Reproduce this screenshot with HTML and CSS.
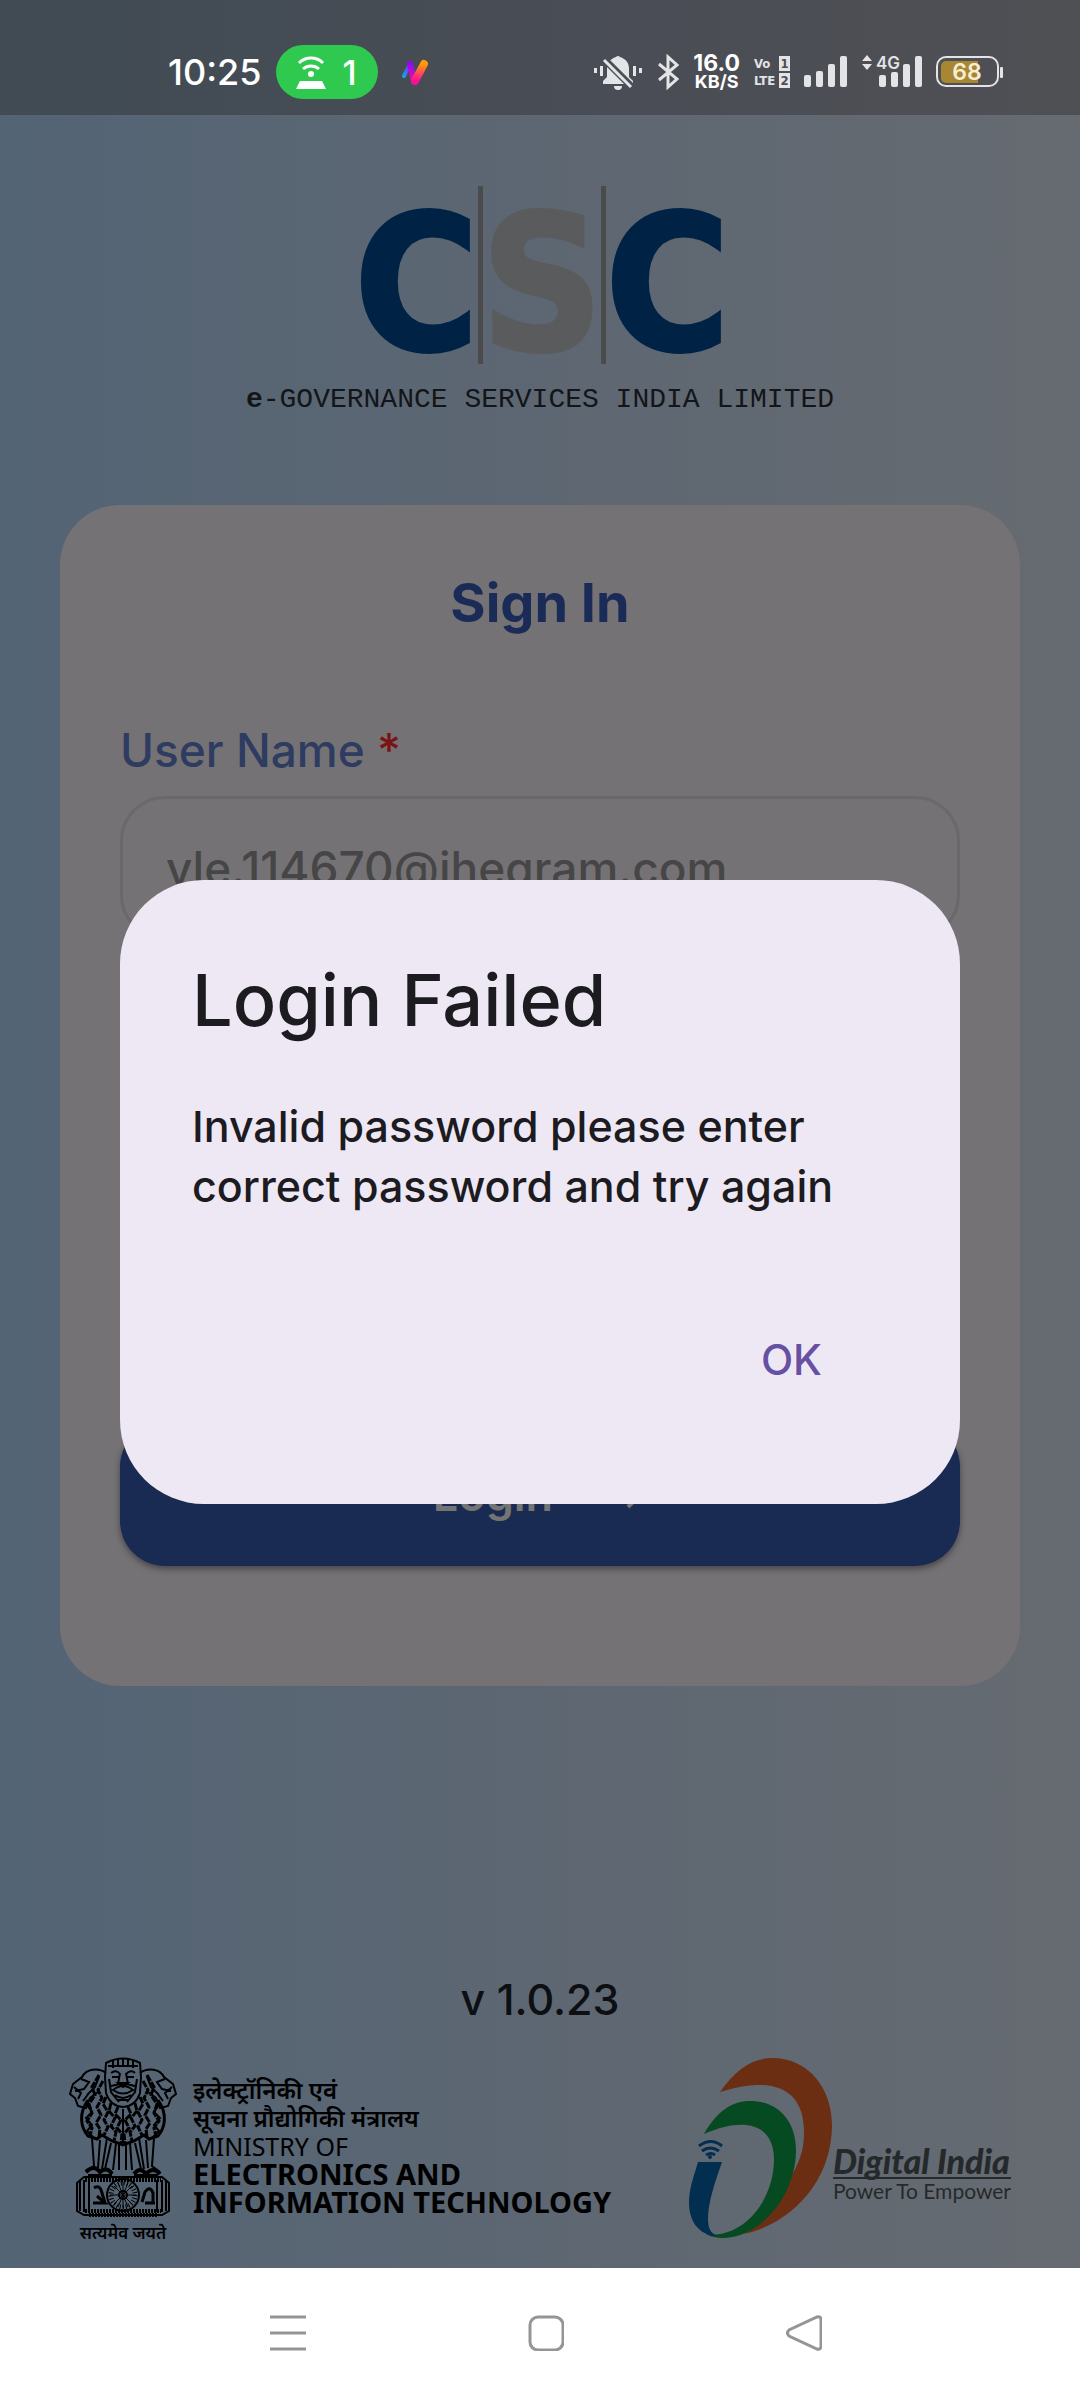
FILE: index.html
```html
<!DOCTYPE html>
<html lang="en">
<head>
  <meta charset="UTF-8" />
  <meta name="viewport" content="width=device-width, initial-scale=1.0"/>
  <title>CSC Login</title>
  <link rel="stylesheet" href="styles.css">
</head>
<body>

  <!-- Status bar -->
  <header class="status-bar">
    <div class="status-left">
      <span class="time">10:25</span>
      <span class="hotspot">
        <svg width="30" height="34" viewBox="0 0 30 34">
          <path d="M3 8a17 17 0 0 1 24 0M7 14a12 12 0 0 1 16 0" fill="none" stroke="#fff" stroke-width="3"/>
          <circle cx="15" cy="19" r="3" fill="#fff"/>
          <path d="M4 26h22l4 8H0z" fill="#fff"/>
        </svg>
        1
      </span>
      <svg class="app-icon" width="28" height="28" viewBox="0 0 28 28">
        <defs>
          <linearGradient id="g1" x1="0" y1="1" x2="1" y2="0"><stop offset="0" stop-color="#18a0e8"/><stop offset="1" stop-color="#9a10f0"/></linearGradient>
          <linearGradient id="g2" x1="0" y1="0" x2="0" y2="1"><stop offset="0" stop-color="#9008f8"/><stop offset="1" stop-color="#f0109a"/></linearGradient>
          <linearGradient id="g3" x1="0" y1="1" x2="0" y2="0"><stop offset="0" stop-color="#ff0a9c"/><stop offset="1" stop-color="#ff9a08"/></linearGradient>
        </defs>
        <path d="M2 18L8 6" stroke="url(#g1)" stroke-width="4" stroke-linecap="round"/>
        <path d="M8 6L12 23" stroke="url(#g2)" stroke-width="6" stroke-linecap="round"/>
        <path d="M13 23L22 6" stroke="url(#g3)" stroke-width="8" stroke-linecap="round"/>
      </svg>
    </div>
    <div class="status-right">
      <svg width="50" height="36" viewBox="0 0 50 36" fill="#e3e4e6">
        <path d="M1 14h3v5H1zM7 12h3v10H7zM40 12h3v10h-3zM46 14h3v5h-3z"/>
        <path d="M23 3a3 3 0 0 1 4 0c6 2 9 6 9 12v8l4 4v3H10v-3l4-4v-8c0-6 3-10 9-12zM21 32h8a4 4 0 0 1-8 0z"/>
        <path d="M10 4l28 28" stroke="#4a4e56" stroke-width="7"/>
        <path d="M11 6l27 27" stroke="#e3e4e6" stroke-width="3"/>
      </svg>
      <svg width="22" height="36" viewBox="0 0 22 36" fill="none" stroke="#e3e4e6" stroke-width="3">
        <path d="M2 10l18 15-9 8V3l9 8L2 26"/>
      </svg>
      <div class="speed"><span>16.0</span><small>KB/S</small></div>
      <div class="volte">
        <span>Vo</span><b>1</b>
        <span>LTE</span><b>2</b>
      </div>
      <svg width="44" height="34" viewBox="0 0 44 34" fill="#e3e4e6">
        <rect x="0" y="20" width="7" height="12" rx="2"/>
        <rect x="12" y="16" width="7" height="16" rx="2"/>
        <rect x="24" y="9" width="7" height="23" rx="2"/>
        <rect x="36" y="1" width="7" height="31" rx="2"/>
      </svg>
      <svg class="signal-4g" width="60" height="34" viewBox="0 0 60 34" fill="#e3e4e6">
        <path d="M0 6l5-6 5 6zM0 9l5 6 5-6z"/>
        <text x="14" y="14" font-size="17">4G</text>
        <rect x="17" y="20" width="7" height="12" rx="2"/>
        <rect x="29" y="17" width="7" height="15" rx="2"/>
        <rect x="41" y="9" width="7" height="23" rx="2"/>
        <rect x="53" y="1" width="7" height="31" rx="2"/>
      </svg>
      <svg class="battery" width="68" height="32" viewBox="0 0 68 32">
        <rect x="1" y="1" width="61" height="29" rx="9" fill="none" stroke="#e3e4e6" stroke-width="2"/>
        <path d="M10 5h32v22H10a5 5 0 0 1-5-5V10a5 5 0 0 1 5-5z" fill="#a98632"/>
        <rect x="64" y="11" width="3" height="11" rx="1" fill="#e3e4e6"/>
        <text x="31" y="24" font-size="23" text-anchor="middle" fill="#f7edd2">68</text>
      </svg>
    </div>
  </header>

  <main class="app">
    <div class="logo">
      <div class="logo-letters">
        <span>C</span><i></i><span class="grey">S</span><i></i><span>C</span>
      </div>
      <p class="logo-text"><b>e</b>-Governance Services India limited</p>
    </div>

    <form class="login-box">
      <h2>Sign In</h2>
      <label for="username">User Name <span class="required">*</span></label>
      <input type="text" id="username" value="vle.114670@ihegram.com" />
      <input type="password" id="password" aria-label="Password" />
      <button type="submit" class="login-btn">
        Login
        <svg width="34" height="34" viewBox="0 0 34 34" fill="none" stroke="#747474" stroke-width="4"><path d="M3 17h26M15 4l13 13-13 13"/></svg>
      </button>
    </form>

    <footer class="footer">
      <p class="version">v 1.0.23</p>
      <div class="partners">
        <div class="ministry">
          <div class="emblem">
            <svg width="108" height="160" viewBox="0 0 108 160" fill="none" stroke="#000" stroke-width="2">
              <!-- side lions -->
              <path d="M37 16c-8-6-20-4-24 4L4 27l-3 10 5 4 3 8 8 2 4-10 8-6M71 16c8-6 20-4 24 4l9 7 3 10-5 4-3 8-8 2-4-10-8-6"/>
              <path d="M12 22l8 3-5 7-9 2M5 30l7 6-3 6M18 38l8-8 4-10M14 44l6-8M96 22l-8 3 5 7 9 2M103 30l-7 6 3 6M90 38l-8-8-4-10M94 44l-6-8"/>
              <!-- centre lion -->
              <path d="M37 6q17-9 34 0l1 14-1 16q-4 13-17 14-13-1-17-14l-1-16z"/>
              <path d="M39 9h30M44 3v8M49 2v8M54 1v8M59 2v8M64 3v8M42 16q5-4 9 1M57 17q5-5 9-1M43 20h7M58 20h7M51 16l-2 11h10l-2-11M42 29l9-2M57 27l9 2M44 33q10-8 20 0-10 7-20 0zM46 38q8 6 16 0M49 43h10M40 22l2 13 8 10M68 22l-2 13-8 10"/>
              <path d="M49 26h10l-5 4z" fill="#000"/>
              <!-- manes -->
              <path d="M19 43c-10 14-7 28 0 36l9 3 5-4 10 6 11 4 11-4 10-6 5 4 9-3c7-8 10-22 0-36" stroke-width="3"/>
              <path d="M18 48l5 7-6 6 6 7-5 6 6 6M90 48l-5 7 6 6-6 7 5 6-6 6M54 52v34"/>
              <path d="M30 18l-7 12 3 8-6 9 3 9-5 8 5 7-2 8M34 24l-5 9 4 8-5 9 4 8-5 8 4 6-1 8M37 40l-3 7 5 8-4 8 4 7-4 8M42 46l-2 8 6 7-4 8 5 6-2 9M49 50l-3 7 6 6-4 8 5 6-1 9M78 18l7 12-3 8 6 9-3 9 5 8-5 7 2 8M74 24l5 9-4 8 5 9-4 8 5 8-4 6 1 8M71 40l3 7-5 8 4 8-4 7 4 8M66 46l2 8-6 7 4 8-5 6 2 9M59 50l3 7-6 6 4 8-5 6 1 9" stroke-dasharray="7 1" stroke-width="3"/>
              <!-- legs -->
              <path d="M23 81l2 28-8 6M31 83l-2 28M38 81l-5 31M47 86l-3 27M50 88v25M61 86l2 27M57 88v25M70 81l5 31M85 81l-2 28 8 6M77 83l2 28M42 86l-6 26M66 86l6 26"/>
              <path d="M17 115q8-8 14 0 7-6 12 2M65 117q6-8 12 0 7-8 14 0M19 119h24M65 119h24" stroke-width="4"/>
              <!-- base -->
              <path d="M15 120h78l7 6v28l-7 4H15l-7-4v-28zM15 123v32M20 123v32M11 124v30M97 124v30M93 123v32M88 123v32"/>
              <path d="M16 123h76M16 154h76" stroke-width="4" stroke-dasharray="2 1"/>
              <circle cx="54" cy="138" r="16"/>
              <circle cx="54" cy="138" r="12" stroke-width="5" stroke-dasharray="1 2"/>
              <circle cx="54" cy="138" r="4"/>
              <path d="M54 125v26M41 138h26M45 129l18 18M63 129l-18 18M49 126l10 24M59 126l-10 24" stroke-width="1"/>
              <path d="M25 131q6-4 8 5l3 10M24 146h12l-8-7M73 145l3-10q5-7 8 1v10M76 146h10" stroke-width="3"/>
              <path d="M20 158h68" stroke-width="4" stroke-dasharray="2 1"/>
            </svg>
            <p lang="hi">सत्यमेव जयते</p>
          </div>
          <div class="ministry-text">
            <p lang="hi">इलेक्ट्रॉनिकी एवं</p>
            <p lang="hi">सूचना प्रौद्योगिकी मंत्रालय</p>
            <p class="light">MINISTRY OF</p>
            <p class="bold">ELECTRONICS AND</p>
            <p class="bold">INFORMATION TECHNOLOGY</p>
          </div>
        </div>
        <div class="digital-india">
          <svg width="144" height="182" viewBox="0 0 144 182">
            <path d="M31 35C47 12 64 1 83 1c37 0 60 31 60 67 0 55-39 98-88 109 20-11 37-33 44-50 9-20 16-28 16-52 0-43-30-57-84-40z" fill="#6c2e12"/>
            <path d="M15 77C28 54 43 44 61 44c28 0 46 20 46 49 0 43-32 86-72 88-8 0-15-2-18-4 35 5 68-31 68-75 0-33-27-44-70-25z" fill="#054a20"/>
            <path d="M9 105h24c-8 23-14 41-14 57 0 10 3 14 9 17C8 178 0 162 0 146c0-15 5-27 9-41z" fill="#022e50"/>
            <path d="M10 89q12-9 23 0M13 94q8-6 17 0M17 98q5-3 9 0" fill="none" stroke="#022e50" stroke-width="3"/>
            <circle cx="21" cy="100" r="2" fill="#022e50"/>
          </svg>
          <div class="digital-text">
            <strong>Digital India</strong>
            <span>Power To Empower</span>
          </div>
        </div>
      </div>
    </footer>

    <div class="overlay">
      <div class="dialog" role="alertdialog" aria-labelledby="dialog-title">
        <h1 id="dialog-title">Login Failed</h1>
        <p>Invalid password please enter correct password and try again</p>
        <button type="button">OK</button>
      </div>
    </div>
  </main>

  <!-- Android navigation -->
  <nav class="nav-bar">
    <button type="button" aria-label="Recent apps">
      <svg width="36" height="36" viewBox="0 0 36 36" stroke="#959595" stroke-width="3"><path d="M0 2h36M0 18h36M0 34h36"/></svg>
    </button>
    <button type="button" aria-label="Home">
      <svg width="36" height="36" viewBox="0 0 36 36" fill="none" stroke="#959595" stroke-width="3"><rect x="2" y="2" width="33" height="33" rx="8"/></svg>
    </button>
    <button type="button" aria-label="Back">
      <svg width="36" height="36" viewBox="0 0 36 36" fill="none" stroke="#959595" stroke-width="3"><path d="M31 2q4-1 4 3v26q0 4-4 3L3 21q-3-3 0-6z"/></svg>
    </button>
  </nav>

</body>
</html>
```
FILE: styles.css
```css
* { margin: 0; padding: 0; box-sizing: border-box; }

body {
  min-height: 100vh;
  display: flex;
  flex-direction: column;
  font-family: Inter, 'Noto Sans', sans-serif;
  background: linear-gradient(to right, #536475, #5e6772 55%, #666b71);
  color: #0d0f12;
}

button {
  border: none;
  background: none;
  font-family: inherit;
  cursor: pointer;
}

.status-bar {
  height: 115px;
  padding: 29px 76px 0 168px;
  display: flex;
  justify-content: space-between;
  background: linear-gradient(to right, #404b54, #4a4d55 60%, #4f5054);
  color: #fff;
}

.status-left,
.status-right {
  height: 86px;
  display: flex;
  align-items: center;
}

.status-left {
  gap: 14px;
}

.time {
  font-size: 36px;
  font-weight: 500;
}

.hotspot {
  width: 102px;
  height: 54px;
  display: flex;
  align-items: center;
  justify-content: center;
  gap: 16px;
  border-radius: 27px;
  background: #30c950;
  font-size: 34px;
  font-weight: 500;
}

.app-icon {
  margin-left: 10px;
}

.status-right {
  gap: 14px;
}

.speed {
  display: flex;
  flex-direction: column;
  align-items: center;
  font-size: 23px;
  line-height: 19px;
  font-weight: 700;
}

.speed small {
  font-size: 18px;
  line-height: 17px;
}

.volte {
  display: grid;
  grid-template-columns: 24px 11px;
  gap: 2px 1px;
  font-family: 'DejaVu Sans Condensed', sans-serif;
  font-size: 13px;
  line-height: 15px;
  font-weight: 700;
  color: #e3e4e6;
}

.volte b {
  background: #e3e4e6;
  color: #4a4e56;
  text-align: center;
}

.signal-4g,
.battery {
  font-weight: 600;
}

.app {
  position: relative;
  flex: 1;
  display: flex;
  flex-direction: column;
}

.logo {
  padding-top: 71px;
  text-align: center;
}

.logo-letters {
  height: 178px;
  padding-left: 4px;
  display: flex;
  justify-content: center;
  gap: 7px;
  font-family: 'DejaVu Sans Condensed', sans-serif;
  font-size: 188px;
  font-weight: 700;
  line-height: 196px;
  color: #002345;
}

.logo-letters span {
  width: 109px;
  display: flex;
  justify-content: center;
  -webkit-text-stroke: 4px currentColor;
}

.logo-letters .grey {
  width: 104px;
  color: #5a5b5d;
}

.logo-letters i {
  width: 5px;
  background: #4b4b4b;
}

.logo-text {
  margin-top: 20px;
  font-family: 'Liberation Mono', monospace;
  font-size: 28px;
  line-height: 32px;
  text-transform: uppercase;
  color: #131518;
}

.logo-text b {
  text-transform: none;
}

.login-box {
  margin: 89px 60px 0;
  padding: 60px 60px 120px;
  display: flex;
  flex-direction: column;
  border-radius: 60px;
  background: #757275;
}

.login-box h2 {
  margin-bottom: 74px;
  text-align: center;
  font-size: 54px;
  line-height: 76px;
  font-weight: 700;
  color: #192b56;
}

.login-box label {
  margin-bottom: 11px;
  font-size: 46px;
  line-height: 70px;
  font-weight: 500;
  color: #2d3c60;
}

.login-box .required {
  color: #7a1414;
}

.login-box input {
  width: 100%;
  height: 144px;
  padding: 0 43px;
  border: 3px solid #6a696a;
  border-radius: 45px;
  background: transparent;
  font-family: inherit;
  font-size: 46px;
  font-weight: 500;
  color: #464646;
}

.login-box #password {
  margin-top: 115px;
}

.login-btn {
  height: 144px;
  margin-top: 223px;
  display: flex;
  align-items: center;
  justify-content: center;
  gap: 60px;
  border-radius: 45px;
  background: #192b52;
  box-shadow: 0 3px 6px rgba(0, 0, 0, 0.4);
  color: #747474;
  font-size: 45px;
  font-weight: 600;
}

.footer {
  margin-top: auto;
  padding: 0 69px 23px;
}

.version {
  margin-bottom: 28px;
  text-align: center;
  font-size: 43px;
  line-height: 60px;
  font-weight: 500;
}

.partners {
  display: flex;
  justify-content: space-between;
  color: #000;
}

.ministry,
.digital-india {
  display: flex;
}

.ministry {
  gap: 16px;
}

.emblem p {
  text-align: center;
  font-size: 17px;
  line-height: 24px;
  font-weight: 600;
}

.ministry-text {
  padding-top: 19px;
  font-family: 'Noto Sans', sans-serif;
  font-size: 24px;
  line-height: 28px;
  font-weight: 600;
  white-space: nowrap;
}

.ministry-text .light {
  font-size: 25px;
  font-weight: 400;
}

.ministry-text .bold {
  font-size: 29px;
  font-weight: 700;
}

.digital-text {
  padding-top: 88px;
  display: flex;
  flex-direction: column;
  font-family: Lato, sans-serif;
  color: #26292b;
}

.digital-text strong {
  border-bottom: 2px solid #26292b;
  font-size: 34px;
  line-height: 32px;
  font-style: italic;
  font-weight: 900;
}

.digital-text span {
  font-size: 21px;
  line-height: 24px;
}

.overlay {
  position: absolute;
  inset: 0;
  padding: 0 120px;
  display: flex;
  align-items: center;
}

.dialog {
  width: 100%;
  padding: 72px 72px 78px;
  display: flex;
  flex-direction: column;
  border-radius: 84px;
  background: #eee8f4;
  color: #1c1b1f;
}

.dialog h1 {
  margin-bottom: 48px;
  font-size: 72px;
  line-height: 96px;
  font-weight: 500;
}

.dialog p {
  font-size: 43px;
  line-height: 60px;
  font-weight: 500;
}

.dialog button {
  align-self: flex-end;
  margin-top: 78px;
  padding: 36px 66px;
  color: #6650a4;
  font-size: 42px;
  line-height: 60px;
  font-weight: 500;
}

.nav-bar {
  height: 132px;
  padding-left: 12px;
  display: flex;
  align-items: center;
  justify-content: center;
  gap: 222px;
  background: #fff;
}
```
